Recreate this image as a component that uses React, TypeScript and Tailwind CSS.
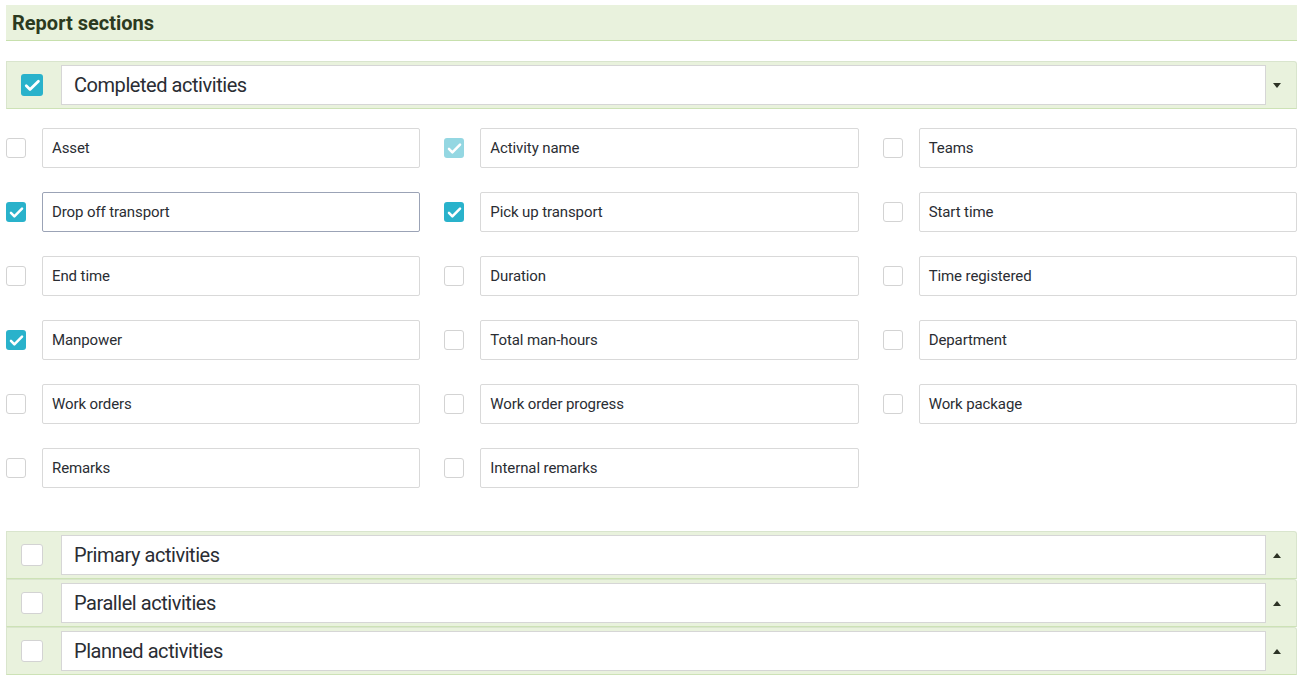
import React from "react";

type Field = { label: string; checked?: boolean; disabled?: boolean; focused?: boolean };

const fields: (Field | null)[] = [
  { label: "Asset" },
  { label: "Activity name", checked: true, disabled: true },
  { label: "Teams" },
  { label: "Drop off transport", checked: true, focused: true },
  { label: "Pick up transport", checked: true },
  { label: "Start time" },
  { label: "End time" },
  { label: "Duration" },
  { label: "Time registered" },
  { label: "Manpower", checked: true },
  { label: "Total man-hours" },
  { label: "Department" },
  { label: "Work orders" },
  { label: "Work order progress" },
  { label: "Work package" },
  { label: "Remarks" },
  { label: "Internal remarks" },
  null,
];

function Check({ checked, disabled, size }: { checked?: boolean; disabled?: boolean; size: "sm" | "lg" }) {
  const dim = size === "lg" ? "w-[22px] h-[22px]" : "w-[20px] h-[20px]";
  if (!checked) {
    return <span className={`${dim} shrink-0 rounded-[3px] border border-[#d3d3d3] bg-white`} />;
  }
  return (
    <span
      className={`${dim} shrink-0 rounded-[3px] flex items-center justify-center ${
        disabled ? "bg-[#94d7e2]" : "bg-[#29b2cb]"
      }`}
    >
      <svg viewBox="0 0 20 20" className="w-[85%] h-[85%]" fill="none">
        <path d="M3.5 10.5l4 4 9-9" stroke="white" strokeWidth="3" strokeLinecap="round" strokeLinejoin="round" />
      </svg>
    </span>
  );
}

function Caret({ up }: { up?: boolean }) {
  return (
    <svg width="8" height="5" viewBox="0 0 8 5" className="shrink-0">
      {up ? <path d="M0 5L4 0L8 5Z" fill="#2d3325" /> : <path d="M0 0L8 0L4 5Z" fill="#2d3325" />}
    </svg>
  );
}

function Section({ label, checked, open }: { label: string; checked?: boolean; open?: boolean }) {
  return (
    <div className="flex h-[48px] items-center rounded-tr-[3px] border border-[#d9e5cd] border-b-[#cde2b6] bg-[#e9f2dd]">
      <div className="flex pl-[14px] pr-[18px]">
        <Check checked={checked} size="lg" />
      </div>
      <div className="flex h-[40px] flex-1 items-center border border-[#d6d6d6] bg-white px-3 text-[20px] tracking-[-0.45px] text-[#2a2d33]">
        {label}
      </div>
      <div className="flex w-[30px] justify-center pr-[8px]">
        <Caret up={!open} />
      </div>
    </div>
  );
}

export default function App() {
  return (
    <div className="min-h-screen bg-white px-[6px] pt-[5px] font-['Roboto',sans-serif]">
      <div className="flex h-[36px] items-center border-b border-[#c7e0ad] bg-[#e9f2dd] px-[6px] text-[20px] font-bold text-[#2c3a20]">
        Report sections
      </div>

      <div className="mt-[20px]">
        <Section label="Completed activities" checked open />
      </div>

      <div className="mt-[19px] grid grid-cols-3 gap-x-[24px] gap-y-[24px]">
        {fields.map((f, i) =>
          f ? (
            <div key={i} className="flex items-center gap-[16px]">
              <Check checked={f.checked} disabled={f.disabled} size="sm" />
              <div
                className={`flex h-[40px] flex-1 items-center rounded-[2px] border bg-white px-[9px] text-[15px] tracking-[-0.1px] text-[#2a2d33] ${
                  f.focused ? "border-[#9ba3b6]" : "border-[#d9d9d9]"
                }`}
              >
                {f.label}
              </div>
            </div>
          ) : (
            <div key={i} />
          )
        )}
      </div>

      <div className="mt-[43px] flex flex-col">
        <Section label="Primary activities" />
        <Section label="Parallel activities" />
        <Section label="Planned activities" />
      </div>
    </div>
  );
}
